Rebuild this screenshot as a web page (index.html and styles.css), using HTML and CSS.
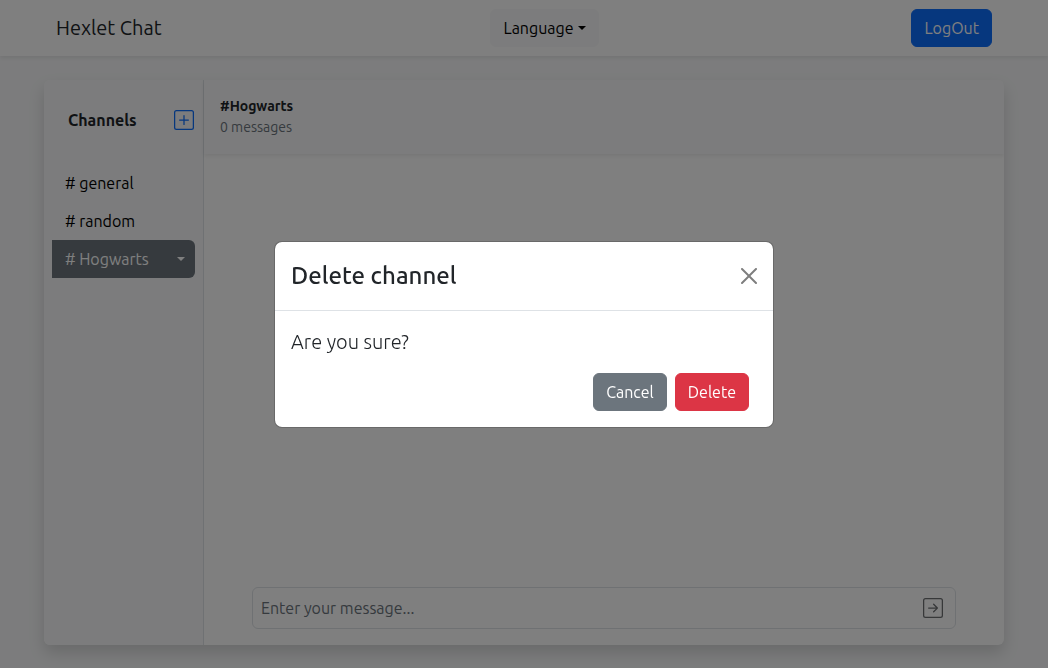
FILE: index.html
```html
<!DOCTYPE html>
<html lang="en">
<head>
<meta charset="utf-8">
<meta name="viewport" content="width=device-width, initial-scale=1">
<title>Hexlet Chat</title>
<link rel="stylesheet" href="styles.css">
</head>
<body>
<div class="page">
  <header class="navbar">
    <div class="container navbar-inner">
      <a class="brand" href="#">Hexlet Chat</a>
      <button class="btn btn-light caret" type="button">Language</button>
      <button class="btn btn-primary" type="button">LogOut</button>
    </div>
  </header>
  <main class="container chat">
    <aside class="sidebar">
      <div class="sidebar-head">
        <b>Channels</b>
        <button class="icon-btn add" type="button" aria-label="Add channel">
          <svg viewBox="0 0 16 16" width="20" height="20" fill="currentColor"><path d="M14 1a1 1 0 0 1 1 1v12a1 1 0 0 1-1 1H2a1 1 0 0 1-1-1V2a1 1 0 0 1 1-1h12zM2 0a2 2 0 0 0-2 2v12a2 2 0 0 0 2 2h12a2 2 0 0 0 2-2V2a2 2 0 0 0-2-2H2z"/><path d="M8 4a.5.5 0 0 1 .5.5v3h3a.5.5 0 0 1 0 1h-3v3a.5.5 0 0 1-1 0v-3h-3a.5.5 0 0 1 0-1h3v-3A.5.5 0 0 1 8 4z"/></svg>
        </button>
      </div>
      <ul class="channels">
        <li><button class="channel" type="button"># general</button></li>
        <li><button class="channel" type="button"># random</button></li>
        <li class="active"><button class="channel" type="button"># Hogwarts</button><button class="channel-menu caret" type="button" aria-label="Channel menu"></button></li>
      </ul>
    </aside>
    <section class="content">
      <div class="content-head">
        <b>#Hogwarts</b>
        <span class="muted">0 messages</span>
      </div>
      <div class="messages"></div>
      <form class="composer">
        <input type="text" placeholder="Enter your message..." aria-label="New message">
        <button class="icon-btn send" type="submit" aria-label="Send" disabled>
          <svg viewBox="0 0 16 16" width="20" height="20" fill="currentColor"><path fill-rule="evenodd" d="M15 2a1 1 0 0 0-1-1H2a1 1 0 0 0-1 1v12a1 1 0 0 0 1 1h12a1 1 0 0 0 1-1V2zM0 2a2 2 0 0 1 2-2h12a2 2 0 0 1 2 2v12a2 2 0 0 1-2 2H2a2 2 0 0 1-2-2V2zm4.500 5.500a.5.5 0 0 0 0 1h5.793l-2.147 2.146a.5.5 0 0 0 .708.708l3-3a.5.5 0 0 0 0-.708l-3-3a.5.5 0 1 0-.708.708L10.293 7.500H4.500z"/></svg>
        </button>
      </form>
    </section>
  </main>
</div>
<div class="backdrop">
  <div class="modal" role="dialog" aria-modal="true" aria-labelledby="modal-title">
    <div class="modal-head">
      <h1 class="modal-title" id="modal-title">Delete channel</h1>
      <button class="icon-btn close" type="button" aria-label="Close">
        <svg viewBox="0 0 16 16" width="16" height="16"><path d="M.293.293a1 1 0 0 1 1.414 0L8 6.586 14.293.293a1 1 0 1 1 1.414 1.414L9.414 8l6.293 6.293a1 1 0 0 1-1.414 1.414L8 9.414l-6.293 6.293a1 1 0 0 1-1.414-1.414L6.586 8 .293 1.707a1 1 0 0 1 0-1.414z"/></svg>
      </button>
    </div>
    <div class="modal-body">
      <p class="lead">Are you sure?</p>
      <div class="modal-actions">
        <button class="btn btn-secondary" type="button">Cancel</button>
        <button class="btn btn-danger" type="button">Delete</button>
      </div>
    </div>
  </div>
</div>
</body>
</html>
```
FILE: styles.css
```css
*, *::before, *::after { box-sizing: border-box; }

body {
  margin: 0;
  background: #f8f9fa;
  color: #212529;
  font-family: Ubuntu, "Noto Sans", sans-serif;
  font-size: 16px;
  line-height: 24px;
}

button, input { font: inherit; color: inherit; }
button { border: 0; background: none; padding: 0; }

.page {
  display: flex;
  flex-direction: column;
  min-height: 100vh;
}

.container {
  width: 100%;
  max-width: 960px;
  margin: 0 auto;
}

.navbar {
  background: #fff;
  box-shadow: 0 2px 4px rgba(0, 0, 0, .075);
}

.navbar-inner {
  display: flex;
  align-items: center;
  justify-content: space-between;
  height: 56px;
  padding: 0 12px;
}

.brand {
  margin-right: 16px;
  color: inherit;
  font-size: 20px;
  line-height: 30px;
  text-decoration: none;
}

.btn {
  display: inline-flex;
  align-items: center;
  justify-content: center;
  padding: 6px 12px;
  border: 1px solid transparent;
  border-radius: 6px;
  white-space: nowrap;
}

.btn-light { background: #f8f9fa; border-color: #f8f9fa; color: #000; }
.btn-primary { background: #0d6efd; border-color: #0d6efd; color: #fff; }
.btn-secondary { background: #6c757d; border-color: #6c757d; color: #fff; }
.btn-danger { background: #dc3545; border-color: #dc3545; color: #fff; }

.caret::after {
  content: "";
  margin-left: 4px;
  border: 4px solid transparent;
  border-top-color: currentColor;
  border-bottom: 0;
}

.chat {
  flex: 1;
  display: flex;
  margin: 24px auto 23px;
  border-radius: 6px;
  background: #fff;
  box-shadow: 0 8px 16px rgba(0, 0, 0, .15);
  overflow: hidden;
}

.sidebar {
  flex: 0 0 160px;
  background: #f8f9fa;
  border-right: 1px solid #dee2e6;
}

.sidebar-head {
  display: flex;
  align-items: center;
  justify-content: space-between;
  padding: 28px 9px 32px 24px;
}

.icon-btn { display: grid; place-items: center; }
.add { color: #0d6efd; }

.channels {
  margin: 0;
  padding: 0 8px;
  list-style: none;
}

.channels li { display: flex; }

.channel {
  flex: 1;
  padding: 7px 13px;
  color: #000;
  text-align: left;
  white-space: nowrap;
}

.active {
  border-radius: 0 6px 6px 0;
  background: #6c757d;
}

.active .channel { color: #fff; }

.channel-menu {
  display: flex;
  align-items: center;
  padding-right: 10px;
  color: #fff;
}

.content {
  flex: 1;
  display: flex;
  flex-direction: column;
  min-width: 0;
}

.content-head {
  display: flex;
  flex-direction: column;
  padding: 16px;
  background: #f8f9fa;
  box-shadow: 0 2px 4px rgba(0, 0, 0, .075);
  font-size: 14px;
  line-height: 21px;
}

.muted { color: #6c757d; }
.messages { flex: 1; }

.composer {
  display: flex;
  margin: 0 48px 16px;
  border: 1px solid #dee2e6;
  border-radius: 6px;
}

.composer input {
  flex: 1;
  min-width: 0;
  padding: 8px;
  border: 0;
  outline: 0;
  background: none;
}

.composer input::placeholder { color: #6c757d; opacity: 1; }
.send { padding: 0 12px; }
.send:disabled { opacity: .65; }

.backdrop {
  position: fixed;
  inset: 0;
  display: flex;
  align-items: center;
  justify-content: center;
  background: rgba(0, 0, 0, .5);
}

.modal {
  width: 100%;
  max-width: 500px;
  border: 1px solid rgba(0, 0, 0, .175);
  border-radius: 8px;
  background: #fff;
  background-clip: padding-box;
}

.modal-head {
  display: flex;
  align-items: center;
  justify-content: space-between;
  padding: 16px;
  border-bottom: 1px solid #dee2e6;
}

.modal-title {
  margin: 0;
  font-size: 24px;
  font-weight: 500;
  line-height: 36px;
}

.close { padding: 0; opacity: .5; }
.modal-body { padding: 16px; }

.lead {
  margin: 0 0 16px;
  font-size: 20px;
  font-weight: 300;
  line-height: 30px;
}

.modal-actions {
  display: flex;
  justify-content: flex-end;
  gap: 8px;
  padding-right: 8px;
}
```
